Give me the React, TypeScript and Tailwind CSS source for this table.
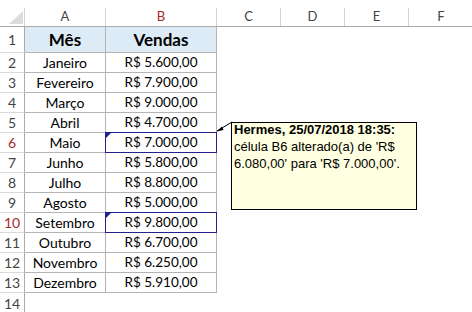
import React from "react";

const rows: [string, string][] = [
  ["Janeiro", "R$ 5.600,00"],
  ["Fevereiro", "R$ 7.900,00"],
  ["Março", "R$ 9.000,00"],
  ["Abril", "R$ 4.700,00"],
  ["Maio", "R$ 7.000,00"],
  ["Junho", "R$ 5.800,00"],
  ["Julho", "R$ 8.800,00"],
  ["Agosto", "R$ 5.000,00"],
  ["Setembro", "R$ 9.800,00"],
  ["Outubro", "R$ 6.700,00"],
  ["Novembro", "R$ 6.250,00"],
  ["Dezembro", "R$ 5.910,00"],
];

// rows with tracked changes (comment marker on column B)
const changed = [6, 10];

function RowHead({ n, h }: { n: number; h: string }) {
  const red = changed.includes(n);
  return (
    <div
      className={`${h} w-[25px] shrink-0 flex items-center justify-center border-r border-b border-r-[#ababab] border-b-[#dadada] text-[14px] ${
        red ? "text-[#a32b2b]" : "text-[#444]"
      }`}
    >
      {n}
    </div>
  );
}

function ChangeMark() {
  return (
    <>
      <div className="pointer-events-none absolute -left-px -top-px -right-px -bottom-px border border-[#22228a]" />
      <svg className="absolute -left-px -top-px" width="8" height="8" viewBox="0 0 8 8">
        <polygon points="0,0 7,0 0,7" fill="#22228a" />
      </svg>
    </>
  );
}

export default function App() {
  return (
    <div className="relative h-[312px] w-[472px] overflow-hidden bg-white font-['Lato',sans-serif] text-black">
      <div className="h-[8px]" />

      {/* column headers */}
      <div className="flex h-[19px] border-b border-[#ababab] text-[13px] text-[#444]">
        <div className="relative w-[25px] shrink-0 border-r border-[#d4d4d4]">
          <svg className="absolute left-[9px] top-[3px]" width="15" height="14" viewBox="0 0 15 14">
            <polygon points="14,0 14,13 0,13" fill="#dcdcdc" />
          </svg>
        </div>
        <div className="flex w-[81px] shrink-0 items-center justify-center border-r border-[#d4d4d4]">A</div>
        <div className="flex w-[111px] shrink-0 items-center justify-center border-r border-[#d4d4d4] text-[#a32b2b]">B</div>
        <div className="flex w-[64px] shrink-0 items-center justify-center border-r border-[#d4d4d4]">C</div>
        <div className="flex w-[64px] shrink-0 items-center justify-center border-r border-[#d4d4d4]">D</div>
        <div className="flex w-[64px] shrink-0 items-center justify-center border-r border-[#d4d4d4]">E</div>
        <div className="flex w-[64px] shrink-0 items-center justify-center">F</div>
      </div>

      {/* header row */}
      <div className="flex">
        <RowHead n={1} h="h-[26px]" />
        <div className="flex h-[26px] w-[81px] shrink-0 items-center justify-center border-r border-b border-[#b4b4b4] bg-[#ddebf7] text-[17px] font-bold">
          Mês
        </div>
        <div className="flex h-[26px] w-[111px] shrink-0 items-center justify-center border-r border-b border-[#b4b4b4] bg-[#ddebf7] text-[17px] font-bold">
          Vendas
        </div>
      </div>

      {rows.map(([month, value], i) => {
        const n = i + 2;
        return (
          <div key={month} className="flex">
            <RowHead n={n} h="h-[20px]" />
            <div className="flex h-[20px] w-[81px] shrink-0 items-center justify-center border-r border-b border-[#b4b4b4] text-[14px]">
              {month}
            </div>
            <div className="relative flex h-[20px] w-[111px] shrink-0 items-center justify-center border-r border-b border-[#b4b4b4] text-[13.5px]">
              {value}
              {changed.includes(n) && <ChangeMark />}
            </div>
          </div>
        );
      })}

      <div className="flex">
        <div className="flex h-[20px] w-[25px] shrink-0 items-center justify-center border-r border-[#ababab] text-[14px] text-[#444]">
          14
        </div>
      </div>

      {/* comment arrow */}
      <svg className="absolute left-[212px] top-[118px]" width="26" height="20" viewBox="0 0 26 20">
        <line x1="5" y1="13" x2="20" y2="4" stroke="#000" strokeWidth="1" />
        <polygon points="4.5,13.5 10,8.5 11.5,12" fill="#000" />
      </svg>

      {/* comment box */}
      <div className="absolute left-[231px] top-[122px] h-[88px] w-[186px] border border-black bg-[#ffffe1] px-[2px] font-['Liberation_Sans',sans-serif] text-[13px] leading-[17px] text-black">
        <div className="-mt-[2px]">
          <div className="font-bold">Hermes, 25/07/2018 18:35:</div>
          <div>célula B6 alterado(a) de 'R$</div>
          <div>6.080,00' para 'R$ 7.000,00'.</div>
        </div>
      </div>
    </div>
  );
}
